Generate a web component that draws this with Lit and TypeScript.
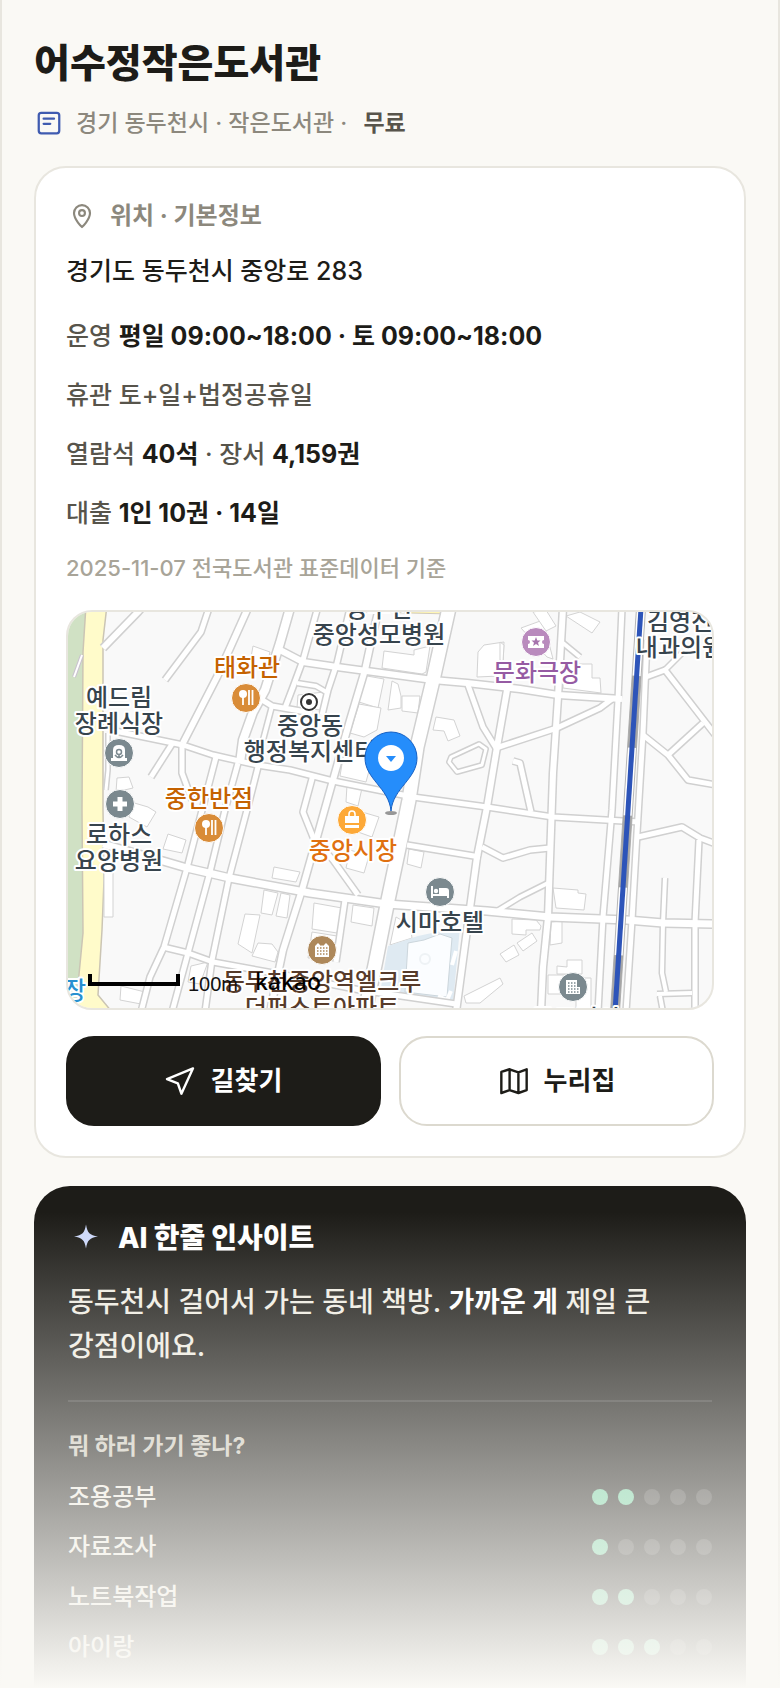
import { LitElement, html, svg, css } from 'lit';
import { customElement, property } from 'lit/decorators.js';
import { classMap } from 'lit/directives/class-map.js';

interface Road {
  d: string;
  width: number;
}

interface MapLabel {
  x: number;
  y: number;
  lines: string[];
  kind?: string;
}

interface Fit {
  name: string;
  score: number;
}

const ROADS: Road[] = [
  { d: 'M103 648 138 612 146 603', width: 6 },
  { d: 'M165 680 201 632 209 608', width: 5 },
  { d: 'M183 743 217 677 248 608', width: 6 },
  { d: 'M115 731 183 745 213 755 257 765 290 770 333 781 413 797 487 807 553 817 623 821 640 822', width: 5 },
  { d: 'M151 777 172 744', width: 5 },
  { d: 'M182 745V773L192 800', width: 5 },
  { d: 'M216 757 195 837 187 868 164 947 150 977 141 1012', width: 5 },
  { d: 'M238 763 225 810 210 872 188 953 172 1012', width: 5 },
  { d: 'M258 767 247 810 229 878 212 960 205 1012', width: 5 },
  { d: 'M290 608 280 643 265 690 253 712 243 740 240 763', width: 8 },
  { d: 'M259 698 272 706 312 713', width: 5 },
  { d: 'M272 706 263 740', width: 4 },
  { d: 'M280 650 303 662 337 667 433 680 467 683 520 689 558 695 622 699', width: 6 },
  { d: 'M317 610 303 660 293 687 285 708', width: 5 },
  { d: 'M350 608 337 663 328 690 322 715', width: 5 },
  { d: 'M297 683 316 686 328 693', width: 4 },
  { d: 'M379 608 373 633 365 670 350 720 333 780 317 837 302 890 283 950 270 1012', width: 6 },
  { d: 'M449 608 433 680 417 747 409 800 406 815 388 900 375 965 365 1012', width: 13 },
  { d: 'M313 775 303 812 313 837 333 860 358 895', width: 5 },
  { d: 'M103 844 163 861 187 868 230 878 310 893 387 904 487 911 550 917 627 920 663 923 716 924', width: 7 },
  { d: 'M407 845 480 857', width: 5 },
  { d: 'M482 847 503 858 530 850 550 848', width: 5 },
  { d: 'M507 690 497 747 487 807 477 857 467 930 456 1012', width: 6 },
  { d: 'M468 685 483 727 496 748 557 728 600 708 612 699', width: 5 },
  { d: 'M451 757 479 744 486 749 482 765 457 772 449 762Z', width: 3 },
  { d: 'M563 608 558 697 553 773 548 917 543 967 541 1012', width: 6 },
  { d: 'M563 643 580 657', width: 4 },
  { d: 'M622 608 618 700 612 810 603 917 598 1012', width: 5 },
  { d: 'M513 761 520 763 531 812', width: 5 },
  { d: 'M647 640 643 733 637 833 632 920 626 1012', width: 5 },
  { d: 'M646 677 665 670 716 736', width: 5 },
  { d: 'M665 670 682 653', width: 4 },
  { d: 'M643 735 668 755 688 780 716 785', width: 5 },
  { d: 'M668 755 703 723', width: 5 },
  { d: 'M638 837 682 827 700 838 716 844', width: 5 },
  { d: 'M699 840 695 923V1012', width: 5 },
  { d: 'M665 878 663 923 662 973 666 992', width: 4 },
  { d: 'M657 994 692 993', width: 4 },
  { d: 'M660 996 663 1012', width: 4 },
  { d: 'M497 911 520 897 548 883', width: 4 },
  { d: 'M163 947 188 953 213 962 290 976 360 990 456 1004', width: 5 },
  { d: 'M345 900 336 962', width: 5 },
  { d: 'M108 733V770L106 790', width: 3 },
];

const BUILDINGS = [
  'M253 646 270 652 266 668 250 663Z',
  'M384 651 414 655V650L430 646 426 672 422 674 382 668Z',
  'M477 677 478 652 484 645 504 642 503 664 499 676Z',
  'M362 681 367 676 384 679 378 708 359 702Z',
  'M359 704 381 708 377 730 364 737 350 733Z',
  'M388 710 392 681 398 684 401 696V708Z',
  'M402 696 420 696 418 713 402 711Z',
  'M298 695 324 692 322 710 297 708Z',
  'M436 717 454 720 460 736 448 741 444 731 433 730Z',
  'M347 785 362 788 358 806 346 802Z',
  'M345 746 374 752 366 782 340 776Z',
  'M521 628 543 620 553 659 547 657Z',
  'M533 612 546 610 556 626 546 631Z',
  'M566 616 580 612 600 622 592 633Z',
  'M563 664H592V678H600L601 693 563 688Z',
  'M500 642 504 645 503 662 500 660Z',
  'M117 778 129 777 133 788 116 792Z',
  'M131 802 148 807 156 812 147 827 129 817Z',
  'M168 834 186 840 182 853 163 849Z',
  'M104 850H113V917H104Z',
  'M245 914 260 915 252 953 238 944Z',
  'M258 943 272 944 278 952 275 962 252 956Z',
  'M264 890 278 893 272 915 261 913Z',
  'M281 893 290 895 287 918 276 916Z',
  'M191 966 208 962 200 984 188 982Z',
  'M121 986 145 992 141 1004 120 1000Z',
  'M274 867 300 872 296 882 272 878Z',
  'M362 812 379 817 372 837 358 832Z',
  'M350 850 369 856 364 873 346 868Z',
  'M409 849 424 852 421 868 407 864Z',
  'M353 905 374 908 372 926 351 922Z',
  'M314 903 342 908 337 933 312 929Z',
  'M312 932 337 936 333 958 308 958Z',
  'M396 917 410 925 412 938 390 945Z',
  'M553 888 578 890V893L586 894 584 910 556 908Z',
  'M512 919 536 920 541 926 540 930 526 930V935L512 934Z',
  'M551 922 562 921V943L550 945Z',
  'M500 954 514 945 519 955 506 962Z',
  'M517 943 532 933 537 941 523 951Z',
  'M557 966 567 967V960H582V974H557Z',
  'M548 975H570V994H548Z',
  'M576 978H591V1012H576Z',
  'M464 996 500 978 503 984 480 1003 466 1003Z',
];

const RAILWAY = 'M641 608 628 810 615 1012';

const LABELS: MapLabel[] = [
  { x: 379, y: 617, lines: ['동두천', '중앙성모병원'] },
  { x: 680, y: 630, lines: ['김영진', '내과의원'] },
  { x: 247, y: 676, lines: ['태화관'], kind: 'food' },
  { x: 119, y: 706, lines: ['예드림', '장례식장'] },
  { x: 310, y: 734, lines: ['중앙동', '행정복지센터'] },
  { x: 537, y: 681, lines: ['문화극장'], kind: 'culture' },
  { x: 209, y: 807, lines: ['중한반점'], kind: 'food' },
  { x: 119, y: 843, lines: ['로하스', '요양병원'] },
  { x: 353, y: 859, lines: ['중앙시장'], kind: 'market' },
  { x: 440, y: 931, lines: ['시마호텔'] },
  { x: 322, y: 990, lines: ['동두천중앙역엘크루', '더퍼스트아파트'], kind: 'home' },
  { x: 75, y: 999, lines: ['장'], kind: 'water' },
  { x: 576, y: 1027, lines: ['두드림시'] },
];

const FITS: Fit[] = [
  { name: '조용공부', score: 2 },
  { name: '자료조사', score: 1 },
  { name: '노트북작업', score: 2 },
  { name: '아이랑', score: 3 },
];

/**
 * Static neighbourhood map with a marker on the library.
 */
@customElement('library-map')
export class LibraryMap extends LitElement {
  static styles = css`
    :host {
      display: block;
      overflow: hidden;
      border: 2px solid #e8e6df;
      border-radius: 26px;
      background: #f9f9f9;
    }

    .map {
      display: block;
      width: 100%;
      height: auto;
    }

    .casing,
    .road {
      fill: none;
      stroke-linejoin: round;
    }

    .casing {
      stroke: #d0d0d0;
    }

    .road {
      stroke: #fff;
    }

    .building {
      fill: #fff;
      stroke: #d3d3d3;
    }

    .label {
      font-family: 'Noto Sans CJK KR', sans-serif;
      font-size: 24px;
      font-weight: 500;
      text-anchor: middle;
      fill: #37444d;
      stroke: #fff;
      stroke-width: 4px;
      stroke-linejoin: round;
      paint-order: stroke;
    }

    .label.food {
      fill: #c56200;
    }

    .label.culture {
      fill: #965ba3;
    }

    .label.market {
      fill: #e07010;
    }

    .label.home {
      fill: #573b2a;
    }

    .label.water {
      fill: #2890d0;
    }

    .badge {
      stroke: #fff;
      stroke-width: 1px;
    }

    .scale {
      font-family: 'Liberation Sans', sans-serif;
      font-size: 20px;
      fill: #111;
    }

    .brand {
      font-family: 'Noto Sans', sans-serif;
      font-size: 23px;
      font-weight: 500;
      fill: #000;
    }
  `;

  private _renderLabel(label: MapLabel) {
    return label.lines.map(
      (line, i) => svg`<text class="label ${label.kind ?? ''}" x=${label.x} y=${label.y + i * 26}>${line}</text>`
    );
  }

  // Fork and spoon badge, used twice
  private _renderFood(x: number, y: number) {
    return svg`
      <g transform="translate(${x} ${y})">
        <circle class="badge" r="14.5" fill="#d98c38" />
        <circle cx="-3" cy="-4" r="4" fill="#fff" />
        <path d="M-3-2V7M3-8V7M6.5-8V7" fill="none" stroke="#fff" stroke-width="1.8" />
      </g>
    `;
  }

  render() {
    return html`
      <svg class="map" viewBox="68 612 644 396" role="img" aria-label="어수정작은도서관 위치 지도">
        <path d="M60 605H86L83 652 82 810 83 933 78 985 76 1012H60Z" fill="#d0e1c4" />
        <path d="M86 605H107L103 640V810L104 880 102 930 98 995 112 1012H76L78 985 83 933 82 810 83 652Z" fill="#fffbca" stroke="#cbc5b4" stroke-width="1.5" />
        <path d="M250 609 290 610 450 614V605H250Z" fill="#fff6b4" stroke="#d0cabb" />
        <path d="M74 677 82 655" stroke="#c9c2cf" stroke-width="4" />
        <path d="M74 677 82 655" stroke="#fff" stroke-width="2" />
        ${BUILDINGS.map((d) => svg`<path class="building" d=${d} />`)}
        <path d="M388 946 418 936 460 927 453 1004 380 993Z" fill="#dfeaf2" />
        <path d="M408 943 424 940 440 934 452 938 447 997 405 992Z" fill="#fbfdff" stroke="#ccd6dc" />
        <circle cx="425" cy="959" r="5" fill="none" stroke="#eef2f5" stroke-width="2" />
        <path d="M456 951 452 965M451 991 447 1000 438 996" fill="none" stroke="#fff" stroke-width="4" />
        ${ROADS.map((r) => svg`<path class="casing" d=${r.d} stroke-width=${r.width + 3} />`)}
        ${ROADS.map((r) => svg`<path class="road" d=${r.d} stroke-width=${r.width} />`)}

        <g fill="none">
          <path d=${RAILWAY} stroke="#b5b5b5" stroke-width="10" />
          <path d=${RAILWAY} stroke="#fff" stroke-width="8" />
          <path d=${RAILWAY} stroke="#a6a6a6" stroke-width="9" stroke-dasharray="72 68" stroke-dashoffset="72" />
          <path d=${RAILWAY} stroke="#2d54b9" stroke-width="5" />
        </g>

        ${LABELS.map((label) => this._renderLabel(label))}

        ${this._renderFood(246, 698)} ${this._renderFood(209, 828)}
        <g transform="translate(119 753)">
          <circle class="badge" r="14.5" fill="#7b898f" />
          <path d="M-8 8V5H-6V-3Q-6-8 0-8T6-3V5H8V8Z" fill="#fff" />
          <circle cy="-1" r="2.5" fill="none" stroke="#7b898f" stroke-width="1.5" />
          <path d="M-4 2Q0 7 4 2M0 2V5" fill="none" stroke="#7b898f" stroke-width="1.5" />
        </g>
        <g transform="translate(120 804)">
          <circle class="badge" r="14.5" fill="#7b898f" />
          <path d="M-7 0H7M0-7V7" stroke="#fff" stroke-width="5" />
        </g>
        <g transform="translate(309 702)">
          <circle r="10" fill="#fff" />
          <circle r="8" fill="#fff" stroke="#333" stroke-width="2" />
          <circle r="3" fill="#333" />
        </g>
        <g transform="translate(536 642)">
          <circle class="badge" r="14.5" fill="#b98abd" />
          <path d="M-8-6H8V-2A2 2 0 0 0 8 2V6H-8V2A2 2 0 0 0-8-2Z" fill="#fff" />
          <path d="M0-5 1.3-1.5 4.5-1.5 2 .8 3 4 0 2-3 4-2 .8-4.5-1.5-1.3-1.5Z" fill="#a673ad" />
        </g>
        <g transform="translate(352 820)">
          <circle class="badge" r="14.5" fill="#fda938" />
          <path d="M-7-4H7V3H-7ZM-7 5H7V8H-7Z" fill="#fff" />
          <path d="M-3-4V-6A3 3 0 0 1 3-6V-4" fill="none" stroke="#fff" stroke-width="1.6" />
        </g>
        <g transform="translate(440 892)">
          <circle class="badge" r="14.5" fill="#7b898f" />
          <path d="M-8-6V6M-8 3H9M8 6V2" fill="none" stroke="#fff" stroke-width="2" />
          <circle cx="-4" cy="-1" r="2.2" fill="#fff" />
          <path d="M-1-4H6Q9-4 9-1V3H-1Z" fill="#fff" />
        </g>
        <g transform="translate(322 950)">
          <circle class="badge" r="14.5" fill="#ae885a" />
          <path d="M-7 7V-4L-4-7-1-4 0-5 1-4 4-7 7-4V7Z" fill="#fff" />
          <path d="M-5-2H6M-5 1H6M-5 4H6" stroke="#ae885a" stroke-width="1.5" stroke-dasharray="1.5 1.5" />
        </g>
        <g transform="translate(573 987)">
          <circle class="badge" r="14.5" fill="#7b898f" />
          <path d="M-7-7H4V0H7V7H-7Z" fill="#fff" />
          <path d="M-5-4H3M-5-1H3M-5 2H6M-5 5H6" stroke="#7b898f" stroke-width="1.5" stroke-dasharray="1.5 1.5" />
        </g>

        <ellipse cx="391" cy="813" rx="6" ry="2" fill="#555" opacity="0.6" />
        <path d="M391 811C389 788 365 779 365 758A26 26 0 0 1 417 758C417 779 393 788 391 811Z" fill="#258dfb" stroke="#1560c4" />
        <circle cx="391" cy="758" r="13" fill="#fff" />
        <path d="M386 756H396L391 762Z" fill="#258dfb" />

        <path d="M90 974V984H178V974" fill="none" stroke="#000" stroke-width="4" />
        <text class="scale" x="188" y="991">100m</text>
        <text class="brand" x="255" y="990">kakao</text>
      </svg>
    `;
  }
}

/**
 * Five-dot score.
 */
@customElement('score-dots')
export class ScoreDots extends LitElement {
  static styles = css`
    :host {
      display: flex;
      gap: 10px;
    }

    .dot {
      width: 16px;
      height: 16px;
      border-radius: 50%;
      background: rgba(255, 255, 255, 0.16);
    }

    .dot.on {
      background: #6fcf9f;
    }
  `;

  @property({ type: Number }) score = 0;

  render() {
    return [1, 2, 3, 4, 5].map(
      (n) => html`<span class=${classMap({ dot: true, on: n <= this.score })}></span>`
    );
  }
}

@customElement('app-root')
export class AppRoot extends LitElement {
  static styles = css`
    :host {
      display: block;
      position: relative;
      box-sizing: border-box;
      min-height: 100vh;
      padding: 38px 32px 0;
      border: solid #e8e6df;
      border-width: 0 2px;
      background: #faf9f5;
      color: #1d1c18;
      font-family: Inter, 'Noto Sans CJK KR', sans-serif;
      font-size: 24px;
      font-weight: 500;
      word-break: keep-all;
    }

    h1,
    h2,
    h3,
    p,
    ul {
      margin: 0;
      padding: 0;
    }

    svg {
      display: block;
      flex: none;
      fill: none;
      stroke: currentColor;
      stroke-linecap: round;
      stroke-linejoin: round;
    }

    .title {
      font-size: 39px;
      font-weight: 800;
      line-height: 50px;
    }

    .meta {
      display: flex;
      align-items: center;
      gap: 12px;
      margin: 18px 0 26px;
      color: #8c887d;
      font-size: 23px;
      line-height: 34px;
    }

    .meta svg {
      color: #3f5bb0;
    }

    .meta b {
      margin-left: 10px;
      color: #57544b;
      font-weight: 700;
    }

    .card {
      padding: 31px 30px 30px;
      border: 2px solid #e8e6df;
      border-radius: 32px;
      background: #fff;
    }

    .card-title {
      display: flex;
      align-items: center;
      gap: 12px;
      color: #8c887d;
      font-size: 24px;
      font-weight: 700;
      line-height: 34px;
    }

    .address {
      margin: 18px 0 26px;
      font-size: 25px;
      line-height: 40px;
    }

    .facts {
      display: flex;
      flex-direction: column;
      gap: 21px;
      color: #57544b;
      font-size: 25px;
      line-height: 38px;
      list-style: none;
    }

    .facts b {
      color: #1d1c18;
      font-weight: 700;
    }

    .source {
      margin: 21px 0 27px;
      color: #a8a498;
      font-size: 22px;
      line-height: 30px;
    }

    .actions {
      display: flex;
      gap: 18px;
      margin-top: 26px;
    }

    .action {
      display: flex;
      flex: 1;
      align-items: center;
      justify-content: center;
      gap: 14px;
      box-sizing: border-box;
      height: 90px;
      border: 2px solid #dcd9cf;
      border-radius: 28px;
      color: #1d1c18;
      font-size: 26px;
      font-weight: 700;
      line-height: 34px;
      text-decoration: none;
    }

    .action.primary {
      border-color: #1d1c18;
      background: #1d1c18;
      color: #fff;
    }

    .insight {
      margin-top: 28px;
      padding: 34px 34px 16px;
      border-radius: 36px 36px 0 0;
      background: #1d1c18;
      color: #efece2;
    }

    .insight-title {
      display: flex;
      align-items: center;
      gap: 14px;
      color: #fff;
      font-size: 28px;
      font-weight: 800;
      line-height: 36px;
    }

    .insight-title svg {
      fill: #ccd8fa;
      stroke: none;
    }

    .summary {
      margin: 24px 0 32px;
      font-size: 28px;
      line-height: 44px;
    }

    .summary b {
      color: #fff;
      font-weight: 700;
    }

    .question {
      margin-bottom: 10px;
      padding-top: 28px;
      border-top: 2px solid rgba(255, 255, 255, 0.12);
      color: #cbc7bb;
      font-size: 23px;
      font-weight: 700;
      line-height: 32px;
    }

    .fits {
      list-style: none;
    }

    .fit {
      display: flex;
      align-items: center;
      justify-content: space-between;
      line-height: 50px;
    }

    /* Preview fade over the lower part of the page */
    .fade {
      position: absolute;
      right: -2px;
      bottom: 0;
      left: -2px;
      height: 476px;
      background: linear-gradient(rgba(250, 249, 245, 0), #faf9f5);
      pointer-events: none;
    }
  `;

  render() {
    return html`
      <h1 class="title">어수정작은도서관</h1>
      <div class="meta">
        <svg width="30" height="30" viewBox="0 0 24 24" stroke-width="1.8" aria-hidden="true">
          <rect x="3.8" y="3.8" width="16.4" height="16.4" rx="2" />
          <path d="M7.7 8.5H16M7.7 12.6H13" />
        </svg>
        <span>경기 동두천시 · 작은도서관 · <b>무료</b></span>
      </div>

      <section class="card">
        <h2 class="card-title">
          <svg width="32" height="32" viewBox="0 0 24 24" stroke-width="1.6" aria-hidden="true">
            <path d="M12 20.3S6 14.8 6 9.8A6 6 0 0 1 18 9.8C18 14.8 12 20.3 12 20.3Z" />
            <circle cx="12" cy="9.8" r="2.2" />
          </svg>
          위치 · 기본정보
        </h2>
        <p class="address">경기도 동두천시 중앙로 283</p>
        <ul class="facts">
          <li>운영 <b>평일 09:00~18:00 · 토 09:00~18:00</b></li>
          <li>휴관 토+일+법정공휴일</li>
          <li>열람석 <b>40석</b> · 장서 <b>4,159권</b></li>
          <li>대출 <b>1인 10권 · 14일</b></li>
        </ul>
        <p class="source">2025-11-07 전국도서관 표준데이터 기준</p>
        <library-map></library-map>
        <div class="actions">
          <a class="action primary" href="#directions">
            <svg width="32" height="32" viewBox="0 0 24 24" stroke-width="1.8" aria-hidden="true">
              <path d="M21 2.5 1.5 10.6 9.6 13.7 12.3 21.5Z" />
            </svg>
            길찾기
          </a>
          <a class="action" href="#homepage">
            <svg width="32" height="32" viewBox="0 0 24 24" stroke-width="1.8" aria-hidden="true">
              <path d="M2.5 5.2 8.7 3.2 15.3 5.5 21.5 3.2V18.8L15.3 21 8.7 18.8 2.5 21ZM8.7 3.2V18.8M15.3 5.5V21" />
            </svg>
            누리집
          </a>
        </div>
      </section>

      <section class="insight">
        <h2 class="insight-title">
          <svg width="36" height="36" viewBox="0 0 36 36" aria-hidden="true">
            <path d="M18 4.5C19.5 13 21.5 15 30 16.5 21.5 18 19.5 20 18 28.5 16.5 20 14.5 18 6 16.5 14.5 15 16.5 13 18 4.5Z" />
          </svg>
          AI 한줄 인사이트
        </h2>
        <p class="summary">동두천시 걸어서 가는 동네 책방. <b>가까운 게</b> 제일 큰 강점이에요.</p>
        <h3 class="question">뭐 하러 가기 좋나?</h3>
        <ul class="fits">
          ${FITS.map(
            (fit) => html`
              <li class="fit">
                ${fit.name}
                <score-dots score=${fit.score} role="img" aria-label="5점 중 ${fit.score}점"></score-dots>
              </li>
            `
          )}
        </ul>
      </section>
      <div class="fade"></div>
    `;
  }
}
